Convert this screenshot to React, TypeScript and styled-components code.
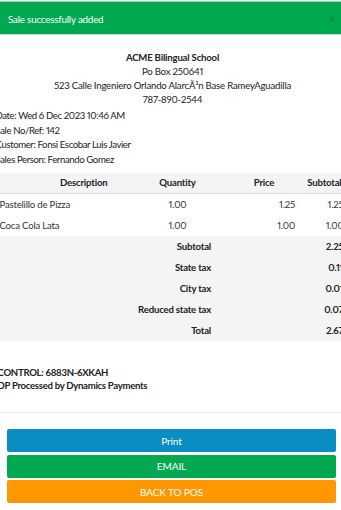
import React from "react";
import styled, { createGlobalStyle } from "styled-components";

const GlobalStyle = createGlobalStyle`
  html, body {
    margin: 0;
    padding: 0;
    background: #ffffff;
    overflow: hidden;
  }
  body {
    font-family: "Lato", "Liberation Sans", sans-serif;
    font-variant-numeric: proportional-nums;
    color: #222222;
    letter-spacing: -0.2px;
  }
`;

export const Page = styled.div`
  width: 341px;
  height: 510px;
  display: flex;
  flex-direction: column;
  overflow: hidden;
`;

export const Toast = styled.div`
  margin-top: 1px;
  height: 34px;
  box-sizing: border-box;
  background: #00a94f;
  border-top: 1px solid #8fd9b0;
  border-bottom: 1px solid #b9e8cd;
  display: flex;
  align-items: center;
  justify-content: space-between;
  padding: 1px 6px 0 8px;
  color: #ffffff;
  font-size: 9.8px;
`;

export const ToastClose = styled.span`
  color: #0b7a3f;
  font-size: 12px;
  font-weight: bold;
  opacity: 0.7;
`;

export const ReceiptWrap = styled.div`
  display: flex;
`;

export const Receipt = styled.div`
  flex: 0 0 356px;
  width: 356px;
  margin-left: -5.5px;
  font-size: 9.6px;
  padding-top: 16px;
`;

export const ShopHeader = styled.div`
  text-align: center;
  line-height: 14px;
`;

export const ShopName = styled.div`
  font-weight: bold;
`;

export const Meta = styled.div`
  margin-top: 2px;
  padding-left: 1px;
  line-height: 14.7px;
  letter-spacing: -0.4px;
`;

export const Table = styled.table`
  margin-top: 5px;
  width: 100%;
  border-collapse: collapse;
  table-layout: fixed;
  font-size: 9.6px;
`;

export const Col = styled.col<{ w: number }>`
  width: ${(p) => p.w}px;
`;

export const Row = styled.tr`
  height: 21px;
`;

export const Th = styled.th<{ align?: string; pad?: string }>`
  height: 20px;
  line-height: 12px;
  padding: ${(p) => p.pad || "0 5px"};
  background: #f4f4f4;
  border-bottom: 1px solid #e2e2e2;
  text-align: ${(p) => p.align || "center"};
  font-weight: bold;
  white-space: nowrap;
`;

export const Td = styled.td<{ align?: string; bold?: boolean; shaded?: boolean; last?: boolean }>`
  height: 21px;
  line-height: 12px;
  padding: ${(p) => (p.last ? "0 7px 0 0" : "0 5px")};
  text-align: ${(p) => p.align || "left"};
  font-weight: ${(p) => (p.bold ? "bold" : "normal")};
  background: ${(p) => (p.shaded ? "#f4f4f4" : "#ffffff")};
  color: ${(p) => (p.bold ? "#222222" : "#333333")};
  white-space: nowrap;
`;

export const Footer = styled.div`
  margin-top: 25px;
  padding-left: 3px;
  font-weight: bold;
  line-height: 13px;
  letter-spacing: -0.3px;
`;

export const Divider = styled.hr`
  margin: 20px 0 0;
  border: 0;
  border-top: 1px solid #ececec;
`;

export const Actions = styled.div`
  display: flex;
  flex-direction: column;
  gap: 2.5px;
  padding: 16px 5px 0 7px;
`;

export const ActionButton = styled.button<{ color: string }>`
  height: 23px;
  border: 0;
  border-radius: 2px;
  background: ${(p) => p.color};
  color: #ffffff;
  font-family: "Lato", "Liberation Sans", sans-serif;
  font-size: 10px;
  letter-spacing: -0.1px;
  display: flex;
  align-items: center;
  justify-content: center;
`;

const items = [
  { name: "Pastelillo de Pizza", qty: "1.00", price: "1.25", sub: "1.25" },
  { name: "Coca Cola Lata", qty: "1.00", price: "1.00", sub: "1.00" },
];

const totals = [
  { label: "Subtotal", value: "2.25" },
  { label: "State tax", value: "0.11" },
  { label: "City tax", value: "0.01" },
  { label: "Reduced state tax", value: "0.07" },
  { label: "Total", value: "2.67" },
];

export default function App() {
  return (
    <Page>
      <GlobalStyle />
      <Toast>
        <span>Sale successfully added</span>
        <ToastClose>×</ToastClose>
      </Toast>
      <ReceiptWrap>
        <Receipt>
          <ShopHeader>
            <ShopName>ACME Bilingual School</ShopName>
            <div>Po Box 250641</div>
            <div>523 Calle Ingeniero Orlando AlarcÃ³n Base RameyAguadilla</div>
            <div>787-890-2544</div>
          </ShopHeader>
          <Meta>
            <div>Date: Wed 6 Dec 2023 10:46 AM</div>
            <div>Sale No/Ref: 142</div>
            <div>Customer: Fonsi Escobar Luis Javier</div>
            <div>Sales Person: Fernando Gomez</div>
          </Meta>
          <Table>
            <colgroup>
              <Col w={144.5} />
              <Col w={77} />
              <Col w={84} />
              <Col w={50.5} />
            </colgroup>
            <thead>
              <Row>
                <Th pad="0 5px 0 39px">Description</Th>
                <Th>Quantity</Th>
                <Th pad="0 0 0 12px">Price</Th>
                <Th align="right" pad="0 9px 0 0">Subtotal</Th>
              </Row>
            </thead>
            <tbody>
              {items.map((it) => (
                <Row key={it.name}>
                  <Td>{it.name}</Td>
                  <Td align="center">{it.qty}</Td>
                  <Td align="right">{it.price}</Td>
                  <Td align="right" last>
                    {it.sub}
                  </Td>
                </Row>
              ))}
              {totals.map((t) => (
                <Row key={t.label}>
                  <Td shaded colSpan={2} align="right" bold>
                    {t.label}
                  </Td>
                  <Td shaded />
                  <Td shaded align="right" bold last>
                    {t.value}
                  </Td>
                </Row>
              ))}
            </tbody>
          </Table>
          <Footer>
            <div>CONTROL: 6883N-6XKAH</div>
            <div>DP Processed by Dynamics Payments</div>
          </Footer>
        </Receipt>
      </ReceiptWrap>
      <Divider />
      <Actions>
        <ActionButton color="#098dc2">Print</ActionButton>
        <ActionButton color="#00a94f">EMAIL</ActionButton>
        <ActionButton color="#ff9800">BACK TO POS</ActionButton>
      </Actions>
    </Page>
  );
}
